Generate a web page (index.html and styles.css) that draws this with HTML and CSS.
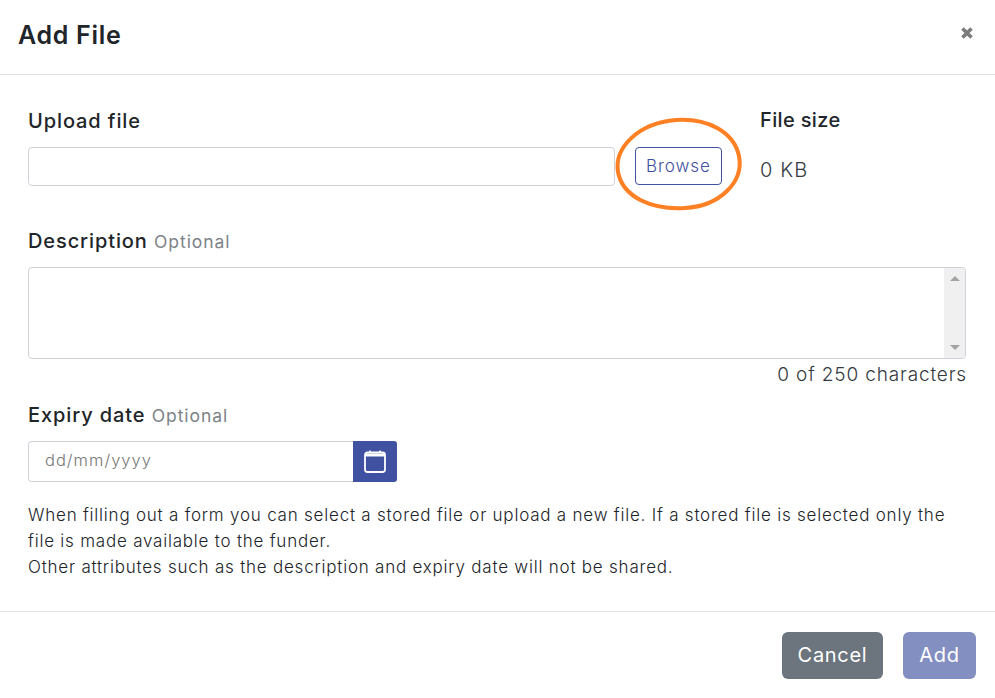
FILE: index.html
```html
<!DOCTYPE html>
<html lang="en">
<head>
<meta charset="utf-8">
<title>Add File</title>
<link rel="stylesheet" href="styles.css">
</head>
<body>
<div class="modal">
  <header class="modal-header">
    <h1 class="modal-title">Add File</h1>
    <svg class="close" width="14" height="14" viewBox="0 0 14 14" aria-label="Close"><path d="M2.5 2.5l9 9M11.5 2.5l-9 9"/></svg>
  </header>
  <main class="modal-body">
    <div class="upload-row">
      <div class="upload-main">
        <div class="label">Upload file</div>
        <div class="upload-controls">
          <div class="input file-input"></div>
          <button class="browse">Browse</button>
        </div>
      </div>
      <div class="size">
        <div class="label size-label">File size</div>
        <div class="size-value">0 KB</div>
      </div>
    </div>
    <div class="label desc-label">Description <span class="optional">Optional</span></div>
    <div class="input textarea">
      <div class="scrollbar">
        <span class="arrow-up"></span>
        <span class="arrow-down"></span>
      </div>
    </div>
    <div class="counter">0 of 250 characters</div>
    <div class="label expiry-label">Expiry date <span class="optional">Optional</span></div>
    <div class="date">
      <div class="date-input">dd/mm/yyyy</div>
      <div class="date-btn">
        <svg width="24" height="24" viewBox="0 0 24 24" fill="none"><rect x="2" y="2.5" width="20" height="19.5" rx="2.5" stroke="#fff" stroke-width="1.8"/><path d="M2 5h20" stroke="#fff" stroke-width="3"/><path d="M7 .5v2M17 .5v2" stroke="#fff" stroke-width="1.6"/></svg>
      </div>
    </div>
    <p class="help">When filling out a form you can select a stored file or upload a new file. If a stored file is selected only the<br>file is made available to the funder.<br>Other attributes such as the description and expiry date will not be shared.</p>
  </main>
  <footer class="modal-footer">
    <button class="btn cancel">Cancel</button>
    <button class="btn add">Add</button>
  </footer>
  <svg class="annotation" width="140" height="104" viewBox="0 0 140 104" fill="none"><path d="M65 5C97 3 123 17 128 41C133 67 109 91 74 93C42 95 12 83 7 57C3 33 27 8 65 5Z" stroke="#fd8124" stroke-width="4"/></svg>
</div>
</body>
</html>
```
FILE: styles.css
```css
* { box-sizing: border-box; }
html, body { margin: 0; padding: 0; background: #fff; }
body { font-family: Inter, "Liberation Sans", sans-serif; color: #212529; overflow: hidden; }
.modal { position: relative; width: 995px; height: 698px; display: flex; flex-direction: column; }
.modal-header { height: 75px; border-bottom: 1px solid #dee2e6; padding: 0 21px 0 18px; display: flex; align-items: center; justify-content: space-between; flex: none; }
.modal-title { margin: 0; font-size: 25px; font-weight: 600; letter-spacing: .7px; color: #212529; position: relative; top: -2px; }
.close { position: relative; top: -4px; stroke: #7b7b7b; stroke-width: 3.6; fill: none; }
.modal-body { flex: 1; padding: 0 29px 0 28px; }
.label { font-size: 20px; font-weight: 500; line-height: 26px; letter-spacing: .9px; color: #212529; }
.size-label { letter-spacing: .35px; }
.optional { font-size: 17.5px; font-weight: 400; line-height: 1; color: #7d8287; letter-spacing: .95px; }
.upload-row { display: flex; padding-top: 33px; }
.upload-main { width: 732px; }
.upload-controls { display: flex; align-items: flex-start; gap: 20px; margin-top: 13px; }
.input { border: 1px solid #ced4da; border-radius: 4px; background: #fff; }
.file-input { width: 587px; height: 39px; }
.browse { width: 87px; height: 38px; border: 1px solid #3f51a0; border-radius: 4px; background: #fff; color: #3f51a0; font: 300 17px Inter, sans-serif; letter-spacing: .95px; padding: 0; }
.size { margin-top: -1px; }
.size-value { font-size: 20px; font-weight: 300; line-height: 26px; margin-top: 24px; letter-spacing: 1.1px; color: #343a40; }
.desc-label { margin-top: 42px; }
.textarea { height: 92px; margin-top: 13px; position: relative; overflow: hidden; display: flex; justify-content: flex-end; }
.scrollbar { width: 21px; background: #f0f0f0; position: relative; display: flex; flex-direction: column; justify-content: space-between; align-items: center; padding: 8px 0; }
.arrow-up { width: 0; height: 0; border: 5px solid transparent; border-top: 0; border-bottom: 5px solid #a3a3a3; }
.arrow-down { width: 0; height: 0; border: 5px solid transparent; border-bottom: 0; border-top: 5px solid #a3a3a3; }
.counter { text-align: right; font-size: 19px; font-weight: 300; line-height: 28px; letter-spacing: .85px; color: #343a40; padding-top: 2px; margin: 0 -1px -2px 0; }
.expiry-label { margin-top: 15px; }
.date { display: flex; width: 369px; height: 41px; margin-top: 13px; }
.date-input { flex: 1; border: 1px solid #ced4da; border-right: 0; border-radius: 4px 0 0 4px; padding: 0 16px; font-size: 16.5px; font-weight: 300; line-height: 37px; color: #777; letter-spacing: 1px; }
.date-btn { width: 44px; background: #3f51a0; border-radius: 0 3px 3px 0; display: flex; align-items: center; justify-content: center; }
.help { margin: 20px 0 0; font-size: 17px; font-weight: 300; line-height: 26px; letter-spacing: .78px; color: #212529; }
.modal-footer { height: 87px; flex: none; border-top: 1px solid #dee2e6; padding: 20px 19px 0 0; display: flex; justify-content: flex-end; align-items: flex-start; gap: 20px; }
.btn { height: 47px; border: 0; border-radius: 6px; color: #fff; font: 400 20px Inter, sans-serif; padding: 0 0 2px; letter-spacing: .7px; }
.cancel { width: 101px; background: #6c757d; }
.add { width: 73px; background: #838fc0; }
.annotation { position: absolute; left: 611px; top: 115px; pointer-events: none; }
```
